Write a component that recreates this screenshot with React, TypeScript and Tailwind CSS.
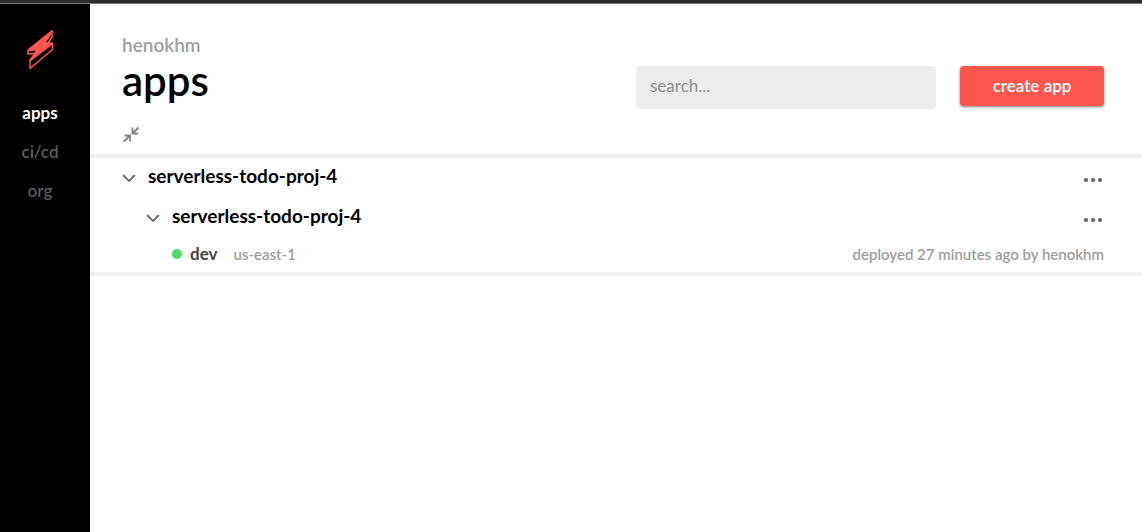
import React from "react";

function Logo() {
  return (
    <svg width="28" height="42" viewBox="0 0 28 42" aria-hidden="true">
      <path
        d="M26 3 2.5 22 12 21.5 8.5 26 4 32.5 26.5 15.5 18 15 21.5 11Z"
        fill="#fd5750"
        stroke="#fd5750"
        strokeWidth="1.8"
        strokeLinejoin="round"
      />
      <path
        d="M26 3V9L22 15M26.5 15V21.5L4 40.5V32M2 22V26L9 25.5"
        fill="none"
        stroke="#fd5750"
        strokeWidth="1.5"
        strokeLinejoin="round"
      />
    </svg>
  );
}

function Chevron() {
  return (
    <svg width="14" height="8" viewBox="0 0 14 8" aria-hidden="true">
      <path d="M1 1 7 7 13 1" fill="none" stroke="#6b6b6b" strokeWidth="1.8" />
    </svg>
  );
}

function MoreButton({ label }: { label: string }) {
  return (
    <button type="button" aria-label={label} className="flex h-6 items-center">
      <svg width="22" height="6" viewBox="0 0 22 6" fill="#606060" aria-hidden="true">
        <circle cx="4" cy="3" r="2.1" />
        <circle cx="11" cy="3" r="2.1" />
        <circle cx="18" cy="3" r="2.1" />
      </svg>
    </button>
  );
}

const links = [
  { name: "apps", active: true },
  { name: "ci/cd", active: false },
  { name: "org", active: false },
];

function Sidebar() {
  return (
    <aside className="flex w-[90px] shrink-0 flex-col items-center bg-black pt-6 pr-[10px]">
      <a href="#home" aria-label="home">
        <Logo />
      </a>
      <nav className="mt-[31px] flex flex-col items-center gap-[15px]">
        {links.map((link) => (
          <a
            key={link.name}
            href="#nav"
            className={
              link.active
                ? "text-[17px] leading-6 font-bold text-white"
                : "text-[17px] leading-6 font-semibold text-[#5c5c5c]"
            }
          >
            {link.name}
          </a>
        ))}
      </nav>
    </aside>
  );
}

export default function App() {
  return (
    <div className="flex min-h-screen flex-col bg-white font-['Lato',sans-serif] text-black">
      <div className="h-1 border-b border-[#777777] bg-[#2e2e2e]" />
      <div className="flex grow">
        <Sidebar />
        <main className="min-w-0 grow">
          <header className="flex items-start justify-between pt-7 pr-[38px] pl-8">
            <div>
              <p className="text-[19px] leading-[26px] font-semibold text-[#9d9d9d]">henokhm</p>
              <h1 className="text-[42px] leading-11 font-semibold">apps</h1>
              <button type="button" aria-label="collapse all" className="mt-5 mb-3 block">
                <svg width="18" height="20" viewBox="0 0 18 20" fill="none" stroke="#808080" strokeWidth="1.8" aria-hidden="true">
                  <path d="M16.5 5.5 10.5 11.5M10.5 5.5V11.5H16M1.5 20 8 13.5M2.5 13.5H8V19.5" />
                </svg>
              </button>
            </div>
            <div className="mt-[34px] flex items-start gap-6">
              <input
                type="search"
                aria-label="search apps"
                placeholder="search..."
                className="h-[43px] w-[300px] rounded bg-[#ededed] px-[14px] pb-1 text-[17px] outline-none placeholder:text-[#8f8f8f]"
              />
              <button
                type="button"
                className="h-10 w-36 rounded bg-[#fd5750] text-[17px] font-semibold text-white shadow-[0_1px_3px_rgba(0,0,0,0.5)]"
              >
                create app
              </button>
            </div>
          </header>
          <section className="border-y-4 border-[#f0f0f0] pr-[38px] pl-8">
            <div className="flex h-10 items-center justify-between">
              <button type="button" className="flex items-center gap-3 text-[19px] leading-6 font-bold">
                <Chevron />
                <span className="pb-1">serverless-todo-proj-4</span>
              </button>
              <div className="pt-1">
                <MoreButton label="app options" />
              </div>
            </div>
            <div className="flex h-10 items-center justify-between pl-6">
              <button type="button" className="flex items-center gap-3 text-[19px] leading-6 font-bold">
                <Chevron />
                <span className="pb-1">serverless-todo-proj-4</span>
              </button>
              <div className="pt-1">
                <MoreButton label="service options" />
              </div>
            </div>
            <div className="flex h-[34px] items-center justify-between pb-0.5 pl-[50px]">
              <div className="flex items-center">
                <span className="mr-2 size-[10px] rounded-full bg-[#4ddb65]" />
                <a href="#dev" className="mr-4 text-[17px] leading-6 font-bold text-[#444444]">dev</a>
                <span className="text-[15px] leading-6 font-semibold text-[#9d9d9d]">us-east-1</span>
              </div>
              <p className="text-[15px] leading-6 font-semibold text-[#9d9d9d]">
                deployed 27 minutes ago by henokhm
              </p>
            </div>
          </section>
        </main>
      </div>
    </div>
  );
}
